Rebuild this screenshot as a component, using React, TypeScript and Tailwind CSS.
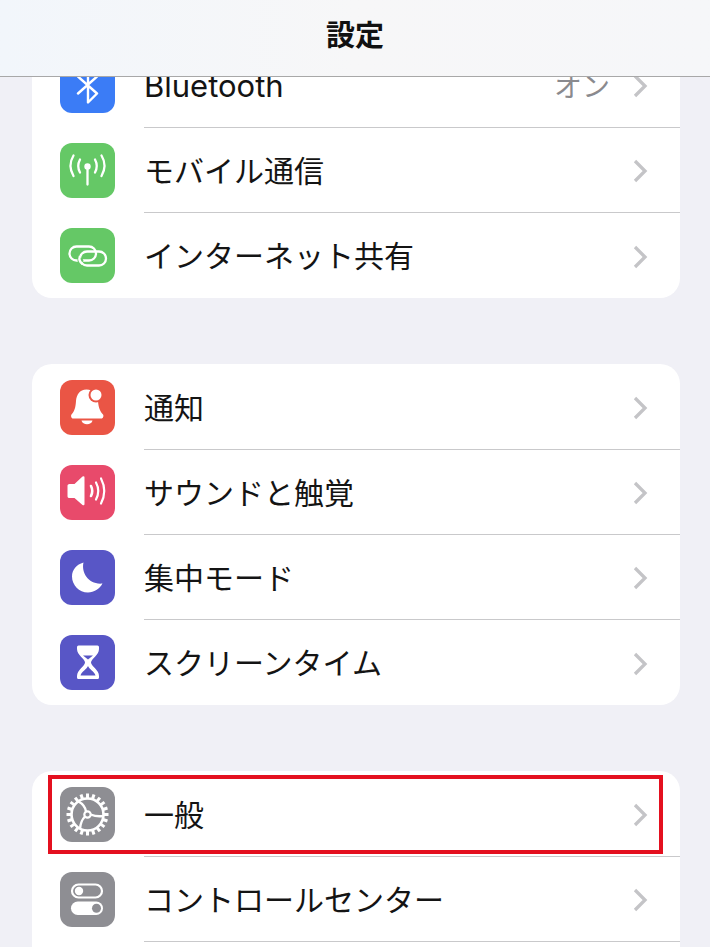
import React from "react";

const W = "#ffffff";

function Bluetooth() {
  return (
    <svg viewBox="0 0 55 55" className="w-full h-full" fill="none" stroke={W} strokeWidth="2.4" strokeLinejoin="round" strokeLinecap="round">
      <path d="M18 18.500 L37 35.500 L28 44.500 V9.500 L37 18.500 L18 35.500" />
    </svg>
  );
}
function Antenna() {
  return (
    <svg viewBox="0 0 55 55" className="w-full h-full" fill="none" stroke={W} strokeWidth="2.300" strokeLinecap="round">
      <circle cx="27.500" cy="23.500" r="3.200" fill={W} stroke="none" />
      <path d="M27.500 24 V41.500" />
      <path d="M20 16.500 Q16.500 23 20 29.500" />
      <path d="M35 16.500 Q38.500 23 35 29.500" />
      <path d="M13.500 12.500 Q7.500 22.500 13.500 33" />
      <path d="M41.500 12.500 Q47.500 22.500 41.500 33" />
    </svg>
  );
}
function Chain() {
  const ring1 = "M16.500 18.500 H29 A7 7 0 0 1 29 32.500 H16.500 A7 7 0 0 1 16.500 18.500 Z";
  const ring2 = "M27 23.500 H39 A7 7 0 0 1 39 37.500 H27 A7 7 0 0 1 27 23.500 Z";
  const patchA = "M35.300 22.500 A7 7 0 0 1 36 25.500";
  const patchB = "M20.100 29.500 A7 7 0 0 0 21.500 34.800";
  return (
    <svg viewBox="0 0 55 55" className="w-full h-full" fill="none" stroke={W} strokeWidth="2.300">
      <path d={ring2} />
      <path d={ring1} />
      <path d={patchB} stroke="#65c866" strokeWidth="5.500" />
      <path d="M19.900 28 A7 7 0 0 0 22.500 36" />
      <path d={patchA} stroke="#65c866" strokeWidth="0" />
    </svg>
  );
}
function Bell() {
  return (
    <svg viewBox="0 0 55 55" className="w-full h-full">
      <path d="M26.500 9.500 C19.500 9.500 16.500 15 16 21 C15.500 28 14.500 31 11.500 34.500 C10.500 36 11.500 38.500 13 38.500 H41.500 C43 38.500 44 36 43 34.500 C40 31 38.500 28 38 21 C37.500 15 33.500 9.500 26.500 9.500 Z" fill={W} />
      <circle cx="36" cy="15" r="7.500" fill="#ea5545" />
      <circle cx="36" cy="15" r="5.500" fill={W} />
      <path d="M21.500 40.500 H32.500 C31.500 45.500 22.500 45.500 21.500 40.500 Z" fill={W} />
    </svg>
  );
}
function Speaker() {
  return (
    <svg viewBox="0 0 55 55" className="w-full h-full" fill="none" stroke={W} strokeLinecap="round">
      <path d="M7.500 20.500 Q7.500 19 9.500 19 H14.500 L22.500 11.500 Q24.500 10.500 24.500 12.500 V39 Q24.500 41 22.500 40 L14.500 33 H9.500 Q7.500 33 7.500 31.500 Z" fill={W} stroke="none" />
      <path d="M31 21 Q33.500 26 31 31" strokeWidth="2.600" />
      <path d="M36 17.500 Q40.500 26 36 34.500" strokeWidth="2.200" />
      <path d="M41 13.500 Q47.500 26 41 38.500" strokeWidth="2.200" />
    </svg>
  );
}
function Moon() {
  return (
    <svg viewBox="0 0 55 55" className="w-full h-full">
      <path d="M23.500 12.500 C21 23 29 35 42.500 33.500 C39.500 39 34 42.500 28 42.500 C19 42.500 12 35 12 26.500 C12 20 16.500 14.500 23.500 12.500 Z" fill={W} />
    </svg>
  );
}
function Hourglass() {
  return (
    <svg viewBox="0 0 55 55" className="w-full h-full">
      <path d="M17 12 Q17 10.500 18.500 10.500 H37.500 Q39 10.500 39 12 V14 C39 20 31 24 31 27.500 C31 31 39 35 39 41 V42.500 Q39 44 37.500 44 H18.500 Q17 44 17 42.500 V41 C17 35 25 31 25 27.500 C25 24 17 20 17 14 Z" fill={W} />
      <path d="M23 20.500 H33 L28 24.500 Z" fill="#5856c6" />
      <path d="M28 31 C27 34 21.500 36.500 20.500 40.500 H35.500 C34.500 36.500 29 34 28 31 Z" fill="#5856c6" />
    </svg>
  );
}
function Gear() {
  const teeth = Array.from({ length: 20 }, (_, i) => (i * 360) / 20);
  return (
    <svg viewBox="0 0 55 55" className="w-full h-full" fill="none" stroke={W}>
      {teeth.map((a) => (
        <path key={a} d="M27.500 6.500 V12" strokeWidth="3" transform={`rotate(${a} 27.500 27.500)`} />
      ))}
      <circle cx="27.500" cy="27.500" r="16" strokeWidth="2.600" />
      <circle cx="27.500" cy="27.500" r="3.200" strokeWidth="2.200" />
      <path d="M26 24.500 Q25 18 18.500 14.500" strokeWidth="2.400" />
      <path d="M30.500 27.500 Q37 30 43 29" strokeWidth="2.400" />
      <path d="M25 29.500 Q20.500 34 20 42" strokeWidth="2.400" />
    </svg>
  );
}
function Toggles() {
  return (
    <svg viewBox="0 0 55 55" className="w-full h-full" fill="none">
      <rect x="12" y="12.500" width="30" height="13" rx="6.500" stroke={W} strokeWidth="2.200" />
      <circle cx="19" cy="19" r="4.200" fill={W} />
      <rect x="11" y="29.500" width="32" height="13.500" rx="6.750" fill={W} />
      <circle cx="36.500" cy="36.250" r="4.500" fill="#8e8e93" />
    </svg>
  );
}
function Chevron() {
  return (
    <svg viewBox="0 0 16 26" className="w-[16px] h-[26px] shrink-0 ml-[22px] translate-y-[1px]" fill="none" stroke="#c4c4c7" strokeWidth="3.300">
      <path d="M3 3 L13 13 L3 23" />
    </svg>
  );
}

type RowProps = {
  bg: string;
  icon: React.ReactNode;
  label: string;
  value?: string;
  last?: boolean;
  highlight?: boolean;
  latin?: boolean;
};

function Row({ bg, icon, label, value, last, highlight, latin }: RowProps) {
  return (
    <div className="relative h-[85px] flex items-center pl-[28px]">
      <div className={`w-[55px] h-[55px] rounded-[12px] shrink-0 overflow-hidden ${bg}`}>{icon}</div>
      <div className={`flex flex-1 items-center h-full ml-[29px] pr-[32px] ${last ? "" : "border-b border-[#c9c9cb]"}`}>
        <span className={`flex-1 text-[#141414] ${latin ? "text-[31px] font-['Inter',sans-serif] translate-y-[1px]" : "text-[30px] font-['Noto_Sans_CJK_JP',sans-serif] -translate-y-[1px]"}`}>
          {label}
        </span>
        {value && <span className="text-[28px] text-[#8a8a8e] font-['Noto_Sans_CJK_JP',sans-serif]">{value}</span>}
        <Chevron />
      </div>
      {highlight && (
        <div className="absolute left-[16px] top-[3px] w-[615px] h-[79px] border-[4px] border-[#e4101f]" />
      )}
    </div>
  );
}

function Card({ children }: { children: React.ReactNode }) {
  return <div className="ml-[32px] mr-[30px] mb-[66px] pt-[1px] bg-white rounded-[20px] overflow-hidden">{children}</div>;
}

export default function App() {
  return (
    <div className="relative w-[710px] h-[947px] overflow-hidden bg-[#f0f0f6] flex flex-col">
      <header className="relative z-10 shrink-0 h-[77px] flex items-center justify-center border-b border-[#a8a8a8] bg-gradient-to-r from-[#f2f6fb] via-[#f7f7f8] to-[#f6f7f9]">
        <h1 className="text-[29px] font-bold text-[#111] font-['Noto_Sans_CJK_JP',sans-serif] mb-[8px]">設定</h1>
      </header>
      <main className="flex-1 overflow-hidden">
        <div className="-mt-[35px]">
          <Card>
            <Row bg="bg-[#3b7cf6]" icon={<Bluetooth />} label="Bluetooth" value="オン" latin />
            <Row bg="bg-[#65c866]" icon={<Antenna />} label="モバイル通信" />
            <Row bg="bg-[#65c866]" icon={<Chain />} label="インターネット共有" last />
          </Card>
          <Card>
            <Row bg="bg-[#ea5545]" icon={<Bell />} label="通知" />
            <Row bg="bg-[#e84a6b]" icon={<Speaker />} label="サウンドと触覚" />
            <Row bg="bg-[#5856c6]" icon={<Moon />} label="集中モード" />
            <Row bg="bg-[#5856c6]" icon={<Hourglass />} label="スクリーンタイム" last />
          </Card>
          <Card>
            <Row bg="bg-[#8e8e93]" icon={<Gear />} label="一般" highlight />
            <Row bg="bg-[#8e8e93]" icon={<Toggles />} label="コントロールセンター" />
            <div className="h-[85px]" />
          </Card>
        </div>
      </main>
    </div>
  );
}
